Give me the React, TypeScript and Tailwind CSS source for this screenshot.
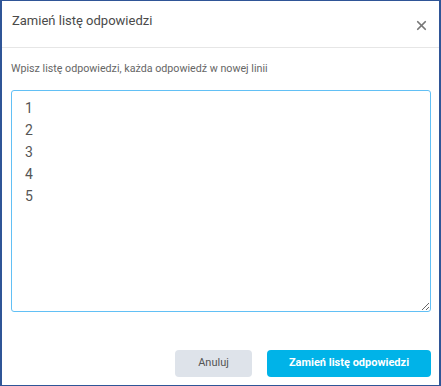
import { X } from 'lucide-react';

export default function App() {
  return (
    <div
      className="flex h-[386px] w-[441px] flex-col border-y border-x-2 border-[#2f5597] bg-white text-[#444]"
      style={{ fontFamily: 'Roboto, "Noto Sans", sans-serif' }}
    >
      <div className="flex h-[47px] shrink-0 items-start justify-between border-b border-[#e6e6e6] pl-[10px] pr-[10px] pt-[11px]">
        <h2 className="text-[13px] leading-[18px] text-[#4a4a4a]">Zamień listę odpowiedzi</h2>
        <button type="button" className="mt-[6px] text-[#777]" aria-label="Zamknij">
          <X className="h-[15px] w-[15px]" strokeWidth={2.8} />
        </button>
      </div>

      <div className="flex flex-1 flex-col px-[9px] pt-[14px]">
        <p className="text-[10.7px] leading-[14px] text-[#666]">
          Wpisz listę odpowiedzi, każda odpowiedź w nowej linii
        </p>
        <textarea
          className="mt-[14px] h-[222px] w-[420px] rounded-[3px] border border-[#62c0f5] px-[13px] pt-[6px] text-[14px] leading-[22px] text-[#555] outline-none"
          defaultValue={'1\n2\n3\n4\n5'}
        />
      </div>

      <div className="flex shrink-0 justify-end gap-[15px] pb-[8px] pr-[8px]">
        <button
          type="button"
          className="h-[27px] w-[77px] rounded-[4px] bg-[#dee3ea] text-[11px] text-[#555]"
        >
          Anuluj
        </button>
        <button
          type="button"
          className="h-[27px] w-[164px] rounded-[4px] bg-[#00b3e8] text-[11px] font-bold text-white"
        >
          Zamień listę odpowiedzi
        </button>
      </div>
    </div>
  );
}
